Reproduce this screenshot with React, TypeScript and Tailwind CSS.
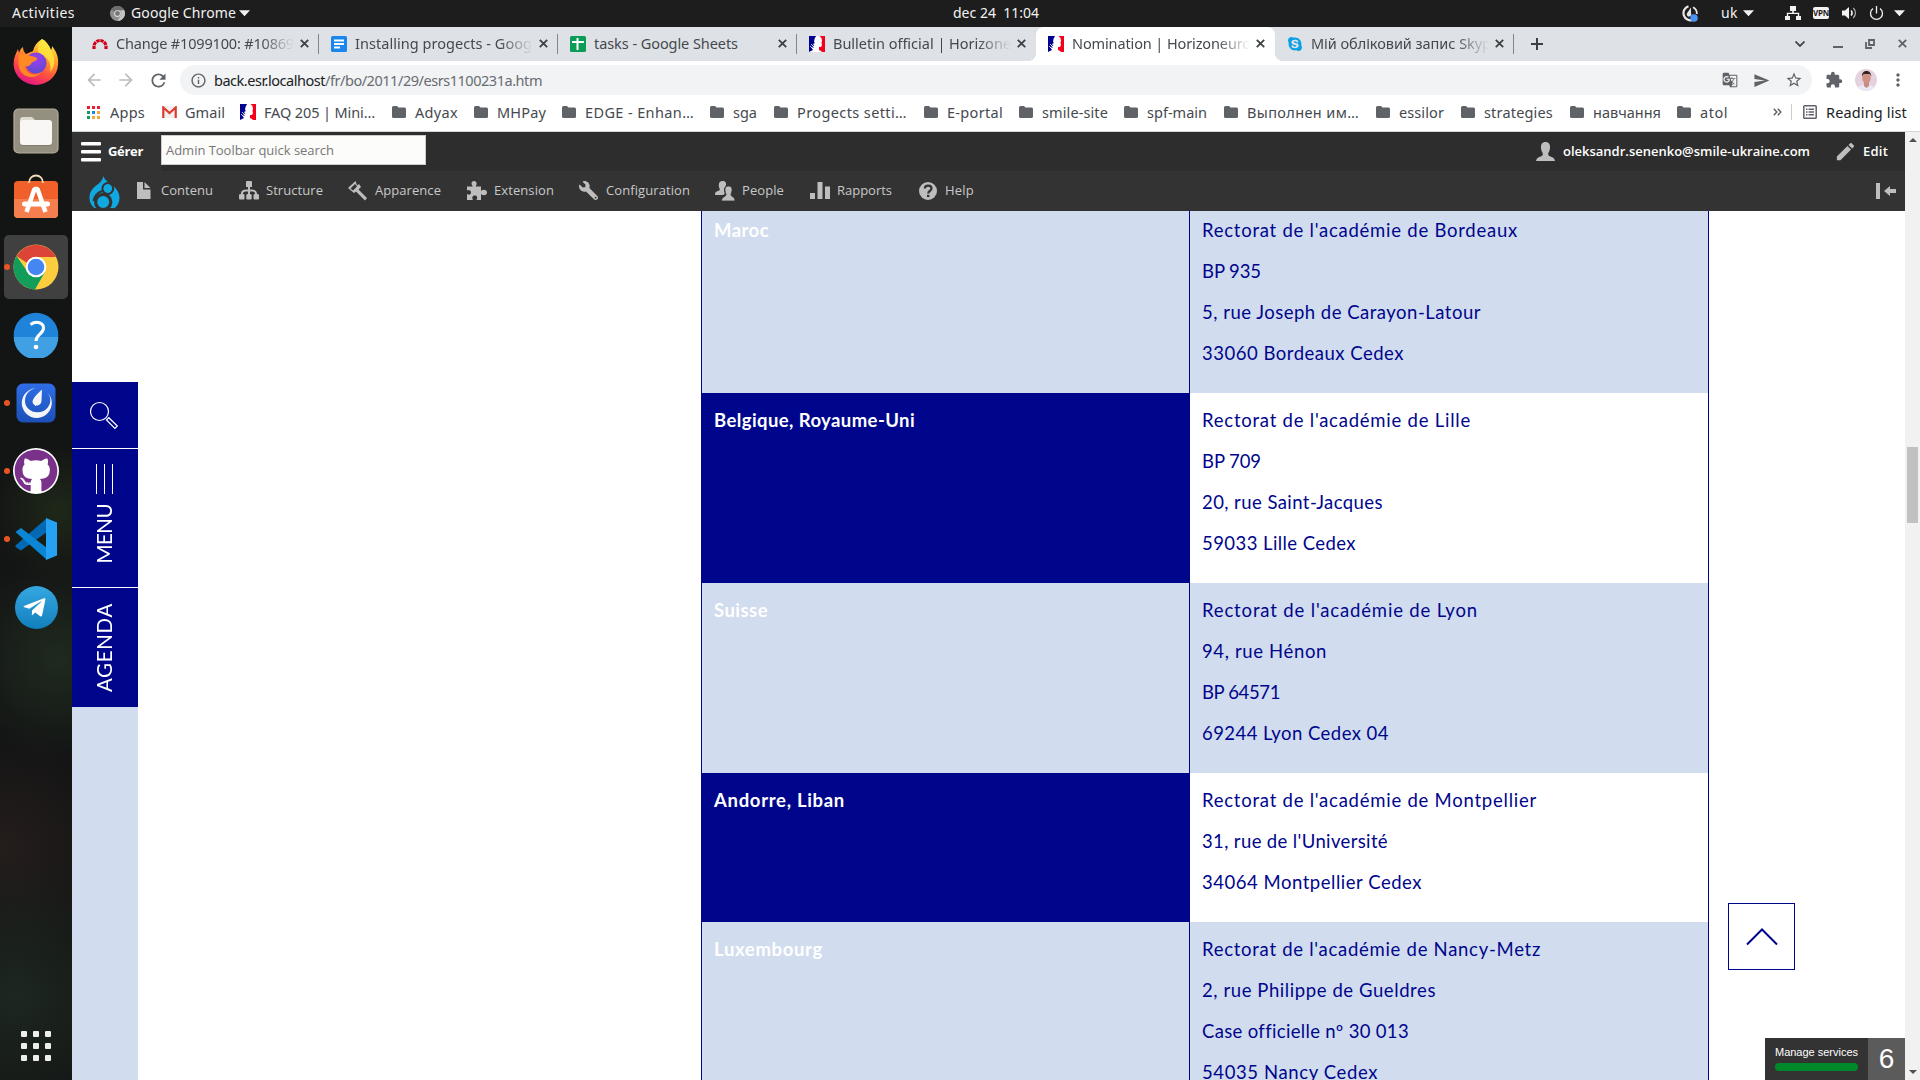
import React, { useLayoutEffect, useRef, useState } from "react";
import { MdGTranslate, MdSend, MdStarBorder, MdExtension, MdMoreVert, MdRefresh, MdArrowBack, MdArrowForward, MdInfoOutline, MdEdit } from "react-icons/md";
import { FaWrench, FaGithub, FaTelegramPlane, FaSkype } from "react-icons/fa";

/* Text set to a fixed advance width by adjusting its tracking. */
function Fit({ w, className = "", children }: { w: number; className?: string; children: string }) {
  const ref = useRef<HTMLSpanElement>(null);
  const [ls, setLs] = useState(0);
  useLayoutEffect(() => {
    const el = ref.current;
    if (!el) return;
    el.style.letterSpacing = "0px";
    const n = Array.from(children).length;
    const next = (w - el.getBoundingClientRect().width) / n;
    el.style.letterSpacing = next + "px";
    setLs(next);
  }, [w, children]);
  return (
    <span ref={ref} className={"inline-block whitespace-pre " + className} style={{ letterSpacing: ls + "px" }}>
      {children}
    </span>
  );
}

function Caret({ className = "" }: { className?: string }) {
  return (
    <svg width="11" height="7" viewBox="0 0 12 7" className={className}>
      <path d="M0 0h12L6 6.5z" fill="#f2f2f2" />
    </svg>
  );
}

function TopBar() {
  return (
    <header className="flex h-[27px] w-full shrink-0 items-center bg-[#1d1d1d] pb-px text-[14px] leading-none text-[#f2f2f2]">
      <div className="ml-[12px] w-[98px]"><Fit w={63}>Activities</Fit></div>
      <svg width="15" height="15" viewBox="0 0 16 16">
        <circle cx="8" cy="8" r="8" fill="#8f8f8f" />
        <path d="M8 0a8 8 0 0 1 7 4.2H8A4 4 0 0 0 4.4 6.5L1.6 3.300A8 8 0 0 1 8 0z" fill="#6d6d6d" />
        <path d="M15 4.200A8 8 0 0 1 8 16l3.500-6A4 4 0 0 0 11 5z" fill="#c4c4c4" />
        <circle cx="8" cy="8" r="3.600" fill="#ddd" />
        <circle cx="8" cy="8" r="2.600" fill="#777" />
      </svg>
      <div className="ml-[6px] w-[108px]"><Fit w={105}>Google Chrome</Fit></div>
      <Caret />
      <div className="ml-[703px] w-[728px]"><Fit w={86}>{"dec 24  11:04"}</Fit></div>
      <svg width="17" height="17" viewBox="0 0 17 17" fill="none">
        <path d="M7.500 1.200A7 7 0 1 0 12 15" stroke="#e6e6e6" strokeWidth="2.200" />
        <path d="M15.800 9A7 7 0 0 0 12 2.200" stroke="#e6e6e6" strokeWidth="1.800" />
        <path d="M10 2.500v5.500a2.300 2.300 0 1 1-3.500-.5z" fill="#e6e6e6" />
        <circle cx="13" cy="13" r="3.800" fill="#4a93f2" />
      </svg>
      <div className="ml-[23px] w-[22px]"><Fit w={17}>uk</Fit></div>
      <Caret />
      <svg className="ml-[31px]" width="16" height="14" viewBox="0 0 16 14" fill="#f2f2f2">
        <path d="M5 0h6v5H8.800v1.800h5.400V10H16v4h-5v-4h1.800V8H3.200v2H5v4H0v-4h1.800V6.800h5.400V5H5z" />
      </svg>
      <div className="ml-[12px] flex h-[12px] w-[16px] items-center justify-center rounded-[2px] bg-[#f2f2f2] text-[8px] font-bold tracking-[-0.3px] text-[#1d1d1d]">VPN</div>
      <svg className="ml-[13px]" width="15" height="14" viewBox="0 0 15 14" fill="none" stroke="#f2f2f2" strokeWidth="1.200">
        <path d="M0 4.500h3L7 1v12L3 9.500H0z" fill="#f2f2f2" stroke="none" />
        <path d="M9 4.500a3.500 3.500 0 0 1 0 5" strokeWidth="1.700" />
        <path d="M11.300 2a7 7 0 0 1 0 10" opacity=".7" />
      </svg>
      <svg className="ml-[12px]" width="15" height="15" viewBox="0 0 15 15" fill="none" stroke="#f2f2f2" strokeWidth="1.300">
        <path d="M4 2.500a6 6 0 1 0 7 0M7.500 0v7.500" />
      </svg>
      <Caret className="ml-[10px]" />
    </header>
  );
}

function FirefoxIcon() {
  return (
    <svg className="mb-[2px]" width="46" height="48" viewBox="0 0 46 48">
      <defs>
        <linearGradient id="ffBody" x1=".8" y1="0" x2=".35" y2="1">
          <stop offset="0" stopColor="#fff44f" /><stop offset=".35" stopColor="#ffa02b" />
          <stop offset=".7" stopColor="#ff4d42" /><stop offset="1" stopColor="#e31587" />
        </linearGradient>
        <radialGradient id="ffCore" cx=".5" cy=".3" r=".7">
          <stop offset="0" stopColor="#a13df0" /><stop offset="1" stopColor="#5b4bd0" />
        </radialGradient>
      </defs>
      <path d="M29 1c4 2 7 6 9 11 1-1 1-3 1-4 4 5 7 11 6 19A22.500 21 0 0 1 23 47 22.500 21 0 0 1 .6 26C.5 20 3 15 5 11l1 4c1-3 2-5 4-6 0 3 1 5 3 7l7-3c1-5 4-9 9-12z" fill="url(#ffBody)" />
      <path d="M29 1c4 2 7 6 9 11 5 9 4 17-1 22 2-9-2-14-8-17-5-2-6-8 0-16z" fill="#ffe83d" opacity=".8" />
      <circle cx="23" cy="25" r="10.500" fill="url(#ffCore)" />
      <path d="M6 17c5-2 9 0 12 1 3 1 6 1 6 3s-5 2-6 5c-1 2-5 3-6 2 1 8 10 11 16 6-4 7-17 7-21-2-2-5-2-10-1-15z" fill="#ff8a23" />
    </svg>
  );
}
function FilesIcon() {
  return (
    <svg width="46" height="46" viewBox="0 0 46 46">
      <rect x="1" y="1" width="44" height="44" rx="4.500" fill="#958f80" stroke="#b4ad9c" strokeWidth="1.200" />
      <path d="M7 12q0-3 3-3h9l3 3h11v9H7z" fill="#dedbd2" />
      <rect x="7" y="13" width="32" height="25" rx="3" fill="#6d675b" opacity=".5" />
      <rect x="7" y="12" width="32" height="25" rx="3" fill="#f8f7f5" />
    </svg>
  );
}
function SoftwareIcon() {
  return (
    <svg className="mb-[6px]" width="46" height="46" viewBox="0 0 46 46">
      <rect x="1" y="8" width="44" height="37" rx="4" fill="#f0602a" />
      <path d="M1 26h44v15a4 4 0 0 1-4 4H5a4 4 0 0 1-4-4z" fill="#f47e4d" />
      <path d="M16 10c0-10 14-10 14 0" fill="none" stroke="#f4dcb4" strokeWidth="1.800" />
      <path d="M13.500 39 21.500 16h3l8 23" fill="none" stroke="#fff" strokeWidth="4.500" strokeLinejoin="bevel" />
      <rect x="9" y="28.500" width="28" height="5" rx="2.500" fill="#fff" />
    </svg>
  );
}
function ChromeIcon() {
  return (
    <svg width="46" height="46" viewBox="0 0 46 46">
      <circle cx="23" cy="23" r="22.500" fill="#fdcd40" />
      <path d="M3.500 12A22.500 22.500 0 0 1 43 13H23a10 10 0 0 0-9 6z" fill="#dc4437" />
      <path d="M3.500 12A22.500 22.500 0 0 0 22 45.500l10-17.500c-6 7-15 5-18-1z" fill="#129e5a" />
      <circle cx="23" cy="23" r="10.300" fill="#fff" />
      <circle cx="23" cy="23" r="8.300" fill="#4586f3" />
    </svg>
  );
}
function HelpIcon() {
  return (
    <svg width="46" height="46" viewBox="0 0 46 46">
      <circle cx="23" cy="23" r="22.300" fill="#1e83d9" />
      <path d="M.7 25a22.300 22.300 0 0 0 44.600 0z" fill="#41a0e4" />
      <path d="M17.500 12.500c6-4 13-2 13 3.500 0 6-7.500 6.500-7.500 13" fill="none" stroke="#fff" strokeWidth="3" />
      <circle cx="23" cy="35" r="2.300" fill="#fff" />
    </svg>
  );
}
function MattermostIcon() {
  return (
    <svg width="40" height="40" viewBox="0 0 40 40">
      <defs><linearGradient id="mm" x1="0" y1="0" x2="0" y2="1"><stop offset="0" stopColor="#2f6de6" /><stop offset="1" stopColor="#1c50b8" /></linearGradient></defs>
      <rect x=".5" y=".5" width="39" height="39" rx="6.500" fill="url(#mm)" />
      <path d="M20.500 5A15 15 0 1 0 31.500 9.500a12 12 0 0 1-4 18.500C18 32 9 26 9 18 9 11 14 6 20.500 5z" fill="#f3f5f8" />
      <path d="M26 6.500c-4 4-8 7-9.300 11-1.400 6 8.500 7 8.800.5z" fill="#f3f5f8" />
    </svg>
  );
}
function VsCodeIcon() {
  return (
    <svg width="44" height="44" viewBox="0 0 44 44">
      <path d="M1.500 28.500 33 1v14L7 33.500 1.500 30z" fill="#0469b4" />
      <path d="M1.500 15 7 11 33 31v12z" fill="#0b86d4" />
      <path d="M32 1l11 4.500v33L32 43z" fill="#25a2f3" />
    </svg>
  );
}

function Dock() {
  const items: { icon: React.ReactNode; run?: boolean; active?: boolean }[] = [
    { icon: <FirefoxIcon /> },
    { icon: <FilesIcon /> },
    { icon: <SoftwareIcon /> },
    { icon: <ChromeIcon />, run: true, active: true },
    { icon: <HelpIcon /> },
    { icon: <MattermostIcon />, run: true },
    { icon: <div className="flex size-[46px] items-center justify-center rounded-full bg-white"><FaGithub className="size-[44px] text-[#7a3189]" /></div>, run: true },
    { icon: <VsCodeIcon />, run: true },
    { icon: <div className="flex size-[43px] items-center justify-center rounded-full bg-linear-to-b from-[#35a7e0] to-[#0f7fbd]"><FaTelegramPlane className="mr-[3px] size-[25px] text-white" /></div> },
  ];
  return (
    <aside className="flex w-[72px] shrink-0 flex-col bg-[#131414] bg-[radial-gradient(circle_at_80%_60%,#1f2a1f_0,transparent_16%),radial-gradient(circle_at_20%_92%,#1d2720_0,transparent_14%),radial-gradient(circle_at_80%_46%,#1e2819_0,transparent_12%),radial-gradient(circle_at_10%_78%,#241d1c_0,transparent_14%)] pt-[2px]">
      {items.map((it, i) => (
        <div key={i} className="relative flex h-[68px] items-center justify-center">
          <div className={"flex size-[64px] items-center justify-center rounded-[5px] " + (it.active ? "bg-[#404040]" : "")}>{it.icon}</div>
          {it.run && <span className="absolute left-[4px] size-[6px] rounded-full bg-[#e95420]" />}
        </div>
      ))}
      <div className="mt-auto mb-[19px] ml-[21px] grid w-[30px] grid-cols-3 gap-[6px]">
        {Array.from({ length: 9 }, (_, i) => <span key={i} className="size-[6px] rounded-[1px] bg-[#eeeeec]" />)}
      </div>
    </aside>
  );
}

function FlagIcon() {
  return (
    <svg width="16" height="16" viewBox="0 0 16 16">
      <rect width="16" height="16" fill="#fff" />
      <path d="M0 0h7L5.500 3l-.5 3 1 1-2 1 1.500 2L3 9.500 5 12l-3-1 2 3-4 2z" fill="#000091" />
      <path d="M2 8l3 3M1 10l3 3" stroke="#fff" strokeWidth=".8" />
      <path d="M16 0h-5.500l2 2 .5 3-.500 2 .5 2-1 2h-2v3l2 1 1 1h3z" fill="#f5001d" />
    </svg>
  );
}
function RedmineIcon() {
  return (
    <svg width="16" height="16" viewBox="0 0 16 16" fill="none">
      <path d="M2 13V10.500a6 6 0 0 1 12 0V13" stroke="#d0021b" strokeWidth="3.200" strokeDasharray="3.300 .7" />
    </svg>
  );
}
function DocsIcon() {
  return (
    <svg width="16" height="16" viewBox="0 0 16 16">
      <rect width="16" height="16" rx="1.500" fill="#1a86ee" />
      <path d="M3 3.500h10v2H3zM3 7h10v2H3zM3 10.500h6v2H3z" fill="#fff" />
    </svg>
  );
}
function SheetsIcon() {
  return (
    <svg width="16" height="16" viewBox="0 0 16 16">
      <rect width="16" height="16" rx="1.500" fill="#0b9d58" />
      <path d="M2 5h4.500V2h2v3H14v2H8.500v7h-2V7H2z" fill="#fff" />
    </svg>
  );
}
function X({ color = "#3c4043" }: { color?: string }) {
  return (
    <svg width="9" height="9" viewBox="0 0 9 9" stroke={color} strokeWidth="1.800"><path d="M.8.8l7.400 7.400M8.200.8.8 8.200" /></svg>
  );
}

function TabStrip() {
  const tabs = [
    { icon: <RedmineIcon />, t: "Change #1099100: #10869", w: 178, fade: true, sep: true },
    { icon: <DocsIcon />, t: "Installing progects - Goog", w: 177, fade: true, sep: true },
    { icon: <SheetsIcon />, t: "tasks - Google Sheets", w: 144, sep: true },
    { icon: <FlagIcon />, t: "Bulletin official | Horizone", w: 178, fade: true },
    { icon: <FlagIcon />, t: "Nomination | Horizoneuro", w: 179, fade: true, active: true },
    { icon: <FaSkype className="size-[16px] text-[#0aa1e4]" />, t: "Мій обліковий запис Skyp", w: 180, fade: true, sep: true },
  ];
  return (
    <div className="flex h-[34px] shrink-0 items-center bg-[#dee1e6] pl-[8px] text-[14.500px] leading-none text-[#45494d]">
      {tabs.map((t, i) => (
        <div
          key={i}
          className={
            "relative flex h-full w-[239px] shrink-0 items-center pb-px pl-[12px] " +
            (t.active ? "rounded-t-lg bg-white before:absolute before:bottom-0 before:-left-[8px] before:size-[8px] before:bg-[radial-gradient(circle_at_0_0,#dee1e6_8px,white_8px)] after:absolute after:bottom-0 after:-right-[8px] after:size-[8px] after:bg-[radial-gradient(circle_at_100%_0,#dee1e6_8px,white_8px)]" : "")
          }
        >
          {t.icon}
          <div className={"ml-[8px] h-[22px] w-[182px] leading-[21px] " + (t.fade ? "mask-[linear-gradient(to_right,black_145px,transparent_178px)]" : "")}>
            <Fit w={t.w}>{t.t}</Fit>
          </div>
          <div className="ml-[2px] flex"><X /></div>
          {t.sep && <span className="absolute right-0 h-[20px] w-px bg-[#80868b]" />}
        </div>
      ))}
      <svg className="mb-px ml-[17px]" width="12" height="12" viewBox="0 0 12 12" stroke="#3c4043" strokeWidth="2"><path d="M6 0v12M0 6h12" /></svg>
      <div className="mr-[13px] mb-px ml-auto flex items-center">
        <svg className="mr-[28px]" width="10" height="6" viewBox="0 0 10 6" fill="none" stroke="#45494d" strokeWidth="1.800"><path d="M.5.5 5 5 9.500.5" /></svg>
        <span className="mt-[7px] mr-[22px] h-[2px] w-[10px] bg-[#5f6368]" />
        <svg className="mr-[23px]" width="10" height="10" viewBox="0 0 10 10" fill="none" stroke="#5f6368" strokeWidth="1.800"><path d="M4 1h5v5H4zM1 3v6h6" /></svg>
        <X color="#5f6368" />
      </div>
    </div>
  );
}

function AddressBar() {
  return (
    <div className="flex h-[38px] shrink-0 items-center bg-white text-[#5f6368]">
      <MdArrowBack className="ml-[12px] size-[20px] text-[#babcbe]" />
      <MdArrowForward className="ml-[12px] size-[20px] text-[#babcbe]" />
      <MdRefresh className="ml-[12px] size-[21px]" />
      <div className="ml-[11px] flex h-[30px] w-[1632px] items-center rounded-full bg-[#f1f3f4] pl-[10px] text-[14.500px] leading-none">
        <MdInfoOutline className="size-[17px]" />
        <Fit w={111} className="ml-[7px] text-[#202124]">back.esr.localhost</Fit>
        <Fit w={217} className="text-[#686c71]">/fr/bo/2011/29/esrs1100231a.htm</Fit>
        <div className="mr-[9px] ml-auto flex items-center">
          <MdGTranslate className="mr-[15px] size-[16px]" />
          <MdSend className="mr-[15px] size-[17px]" />
          <MdStarBorder className="size-[18px]" />
        </div>
      </div>
      <MdExtension className="ml-[13px] size-[18px]" />
      <svg className="ml-[12px]" width="22" height="22" viewBox="0 0 22 22">
        <defs><clipPath id="av"><circle cx="11" cy="11" r="11" /></clipPath></defs>
        <g clipPath="url(#av)">
          <rect width="22" height="22" fill="#e4d3df" />
          <path d="M2 22c0-5 4-6 9-6s9 1 9 6z" fill="#e8eaf6" />
          <path d="M9 13h5v4l-2.500 2L9 17z" fill="#c98b7d" />
          <ellipse cx="11.500" cy="9" rx="4.300" ry="5.800" fill="#cf9284" />
          <path d="M7 7.500c-1-7.500 10-7.500 9.200 0L15 5H8.500z" fill="#33241f" />
        </g>
      </svg>
      <MdMoreVert className="ml-[11px] size-[20px]" />
    </div>
  );
}

function Folder() {
  return (
    <svg width="14" height="12" viewBox="0 0 14 12"><path d="M1.500 0H5l1.500 1.500h6A1.500 1.500 0 0 1 14 3v7.500a1.500 1.500 0 0 1-1.500 1.500h-11A1.500 1.500 0 0 1 0 10.500v-9A1.500 1.500 0 0 1 1.500 0z" fill="#5f6368" /></svg>
  );
}

function Bookmarks() {
  const folders: [string, number, number][] = [
    ["Adyax", 43, 16], ["MHPay", 49, 16], ["EDGE - Enhan…", 109, 16], ["sga", 24, 17], ["Progects setti…", 110, 17],
    ["E-portal", 56, 16], ["smile-site", 66, 16], ["spf-main", 60, 17], ["Выполнен им…", 112, 17], ["essilor", 45, 17],
    ["strategies", 69, 17], ["навчання", 68, 16], ["atol", 28, 16],
  ];
  const dots = ["#ea2039", "#ea2039", "#ea2039", "#11a05b", "#1a86ee", "#f6a63b", "#11a05b", "#f6a63b", "#f6a63b"];
  return (
    <div className="flex h-[33px] shrink-0 items-center border-b border-[#d5d7d6] bg-white pb-[6px] pl-[15px] text-[14.500px] leading-none text-[#45494d]">
      <div className="mr-[10px] grid grid-cols-3 gap-[2px]">
        {dots.map((c, i) => <span key={i} className="size-[3px]" style={{ backgroundColor: c }} />)}
      </div>
      <Fit w={35}>Apps</Fit>
      <svg className="ml-[17px]" width="15" height="12" viewBox="0 0 15 12">
        <rect width="15" height="12" rx="1" fill="#f0f0f0" />
        <path d="M1.300 12V1.500L7.500 7l6.200-5.500V12" fill="none" stroke="#de3b31" strokeWidth="2.200" />
      </svg>
      <Fit w={40} className="ml-[8px]">Gmail</Fit>
      <div className="mr-[8px] ml-[15px]"><FlagIcon /></div>
      <Fit w={111} className="mr-[17px]">FAQ 205 | Mini…</Fit>
      {folders.map(([t, w, g], i) => (
        <React.Fragment key={i}>
          <Folder />
          <Fit w={w} className="ml-[9px]">{t}</Fit>
          <span className={g === 17 ? "w-[17px]" : "w-[16px]"} />
        </React.Fragment>
      ))}
      <div className="mr-[13px] ml-auto flex items-center">
        <svg width="9" height="8" viewBox="0 0 9 8" fill="none" stroke="#5f6368" strokeWidth="1.500"><path d="M.8.8 3.800 4 .8 7.200M4.800.8 7.800 4l-3 3.200" /></svg>
        <span className="ml-[9px] h-[16px] w-px bg-[#c9ccd0]" />
        <svg className="ml-[11px]" width="14" height="14" viewBox="0 0 14 14" fill="none" stroke="#5f6368"><rect x=".8" y=".8" width="12.400" height="12.400" rx=".8" strokeWidth="1.500" /><path d="M3 4.300h1.500M3 7h1.500M3 9.700h1.500M5.500 4.300H11M5.500 7H11M5.500 9.700H11" strokeWidth="1.400" /></svg>
        <Fit w={81} className="ml-[9px] text-[#202124]">Reading list</Fit>
      </div>
    </div>
  );
}

function UserShape() {
  return (
    <svg width="19" height="20" viewBox="0 0 19 20" fill="#bebebe">
      <path d="M9.500 0C13 0 14.300 2.500 14 6c-.2 2.500-1 4-1.700 5-.5 2 .2 3 2.200 3.600 2.500.8 4 2 4.500 4.400H0c.5-2.400 2-3.600 4.500-4.400 2-.6 2.700-1.600 2.200-3.600C6 10 5.200 8.500 5 6c-.3-3.500 1-6 4.500-6z" />
    </svg>
  );
}

function DrupalDrop() {
  return (
    <svg className="mr-[17px] ml-[17px]" width="31" height="33" viewBox="0 0 31 33">
      <path d="M14.300 0C16 4.500 19 6 23 9c4.500 3.500 7.500 7.500 7.500 13 0 4.500-2 8-5.500 10.500H6C2.500 30 .5 26.500.5 22 .5 16.500 3 13 6.500 10 10.500 7 13.500 5 14.300 0z" fill="#0fa8e0" />
      <path d="M4.500 25c1-5 4-8.500 9-10" fill="none" stroke="#333" strokeWidth="2.200" />
      <circle cx="18.800" cy="12.500" r="5.300" fill="none" stroke="#333" strokeWidth="2.200" />
      <circle cx="14.200" cy="26" r="7.600" fill="#0fa8e0" stroke="#333" strokeWidth="3.200" />
      <circle cx="18.800" cy="12.500" r="4.200" fill="#0fa8e0" />
      <path d="M5 32h19l3 2H3z" fill="#333" />
    </svg>
  );
}

const trayIcon = {
  content: <svg width="14" height="17" viewBox="0 0 14 17" fill="#bebebe"><path d="M0 0h6v7.500h7.500V17H0zM7.500 0l6 6h-6z" /></svg>,
  structure: <svg width="20" height="19" viewBox="0 0 20 19" fill="#bebebe"><path d="M7 1q0-1 1-1h4q1 0 1 1v5h-2v2.500c4 0 7 .5 7 4.500q2 0 2 1v3.500q0 1-1 1h-3.500q-1 0-1-1V14q0-1 1.500-1c0-2-1-2.500-5-2.500V13q1.700 0 1.700 1v3.500q0 1-1 1H8.300q-1 0-1-1V14q0-1 1.700-1v-2.500c-4 0-5 .5-5 2.500q1.500 0 1.500 1v3.500q0 1-1 1H1q-1 0-1-1V14q0-1 2-1c0-4 3-4.500 7-4.500V6H7z" /></svg>,
  appearance: <svg width="19" height="20" viewBox="0 0 19 20" fill="#bebebe"><path d="M7.500 0 0 7l6 5 2-1.500 9 9 2-2.500-8.500-8.500L13 6l-2-3-2 1.500zM7 3l2 2.500-4 4-2.500-2z" /></svg>,
  extension: <svg width="20" height="20" viewBox="0 0 20 20" fill="#bebebe"><path d="M6 5.500C3.500 3 4.500 0 7 0s3.700 3 1.500 5.500H14V10c2-2 6-1.500 6 1.500s-4 3.500-6 1.500v6H9.500c1.500-2.500.5-4.500-1.700-4.500S4.500 16.500 6 19H0v-6c2 1.500 4 .5 4-1.500S2 8 0 9.500v-4z" /></svg>,
  people: <svg width="20" height="20" viewBox="0 0 20 20" fill="#bebebe"><path d="M7.500 0c3 0 4 2 3.500 4.500C10 5.500 9 7 9 9c0 2 .6 3 1 3.600L8 14H0c0-3 1-3.500 3-4 2-.6 2-1.500 1.500-2.500C3 3.500 4 0 7.500 0z" /><path d="M13.500 5c3 0 4 2.500 3.500 5-.4 2-1 2.300-1 4 .5 2 4 1.500 4 6H6.500c0-4 3.500-4 4.500-6 0-1.500-.7-2-1-4-.5-2.500.5-5 3.500-5z" stroke="#333" strokeWidth=".8" /></svg>,
  reports: <svg width="20" height="17" viewBox="0 0 20 17" fill="#bebebe"><path d="M0 11h5v6H0zM7.500 0h5v17h-5zM15 4.500h5V17h-5z" /></svg>,
  help: <svg width="18" height="18" viewBox="0 0 18 18"><circle cx="9" cy="9" r="9" fill="#bebebe" /><path d="M5.800 6.500C6 2.500 12.500 3 12.500 6.500 12.500 9 9.200 8.500 9.200 11.500" fill="none" stroke="#333" strokeWidth="2.200" /><rect x="8" y="12.800" width="2.400" height="2.300" fill="#333" /></svg>,
};

function AdminToolbar() {
  const items: { icon: React.ReactNode; t: string; w: number; cls: string }[] = [
    { icon: trayIcon.content, t: "Contenu", w: 52, cls: "w-[102px] gap-[10px]" },
    { icon: trayIcon.structure, t: "Structure", w: 57, cls: "w-[109px] gap-[7px]" },
    { icon: trayIcon.appearance, t: "Apparence", w: 66, cls: "w-[119px] gap-[8px]" },
    { icon: trayIcon.extension, t: "Extension", w: 60, cls: "w-[112px] gap-[7px]" },
    { icon: <FaWrench className="size-[19px] -scale-x-100 text-[#bebebe]" />, t: "Configuration", w: 84, cls: "w-[136px] gap-[8px]" },
    { icon: trayIcon.people, t: "People", w: 42, cls: "w-[95px] gap-[7px]" },
    { icon: trayIcon.reports, t: "Rapports", w: 55, cls: "w-[109px] gap-[7px]" },
    { icon: trayIcon.help, t: "Help", w: 29, cls: "w-[60px] gap-[8px]" },
  ];
  return (
    <div className="shrink-0 font-['Open_Sans','Noto_Sans',sans-serif] text-[13px] leading-none">
      <div className="flex h-[39px] items-center bg-[#2d2d2d] font-bold text-white">
        <div className="flex h-full w-[89px] items-center bg-[#333] pl-[9px]">
          <svg width="20" height="20" viewBox="0 0 20 20" fill="#fff"><rect width="20" height="3.600" rx="1" /><rect y="8" width="20" height="3.600" rx="1" /><rect y="16" width="20" height="3.600" rx="1" /></svg>
          <Fit w={35} className="ml-[7px]">Gérer</Fit>
        </div>
        <div className="mb-[3px] flex h-[30px] w-[265px] items-center border border-[#ccc] bg-[#fcfcfa] pl-[4px] font-normal text-[#777]">
          <Fit w={168}>Admin Toolbar quick search</Fit>
        </div>
        <div className="mr-[17px] ml-auto flex items-center font-semibold">
          <UserShape />
          <Fit w={247} className="ml-[8px]">oleksandr.senenko@smile-ukraine.com</Fit>
          <MdEdit className="ml-[24px] size-[23px] text-[#bebebe]" />
          <Fit w={25} className="ml-[6px]">Edit</Fit>
        </div>
      </div>
      <div className="flex h-[40px] items-center bg-[#333] pb-px text-[#c8c8c8]">
        <div className="pt-[3px]"><DrupalDrop /></div>
        {items.map((it) => (
          <div key={it.t} className={"flex shrink-0 items-center " + it.cls}>
            {it.icon}
            <Fit w={it.w} className="pb-px">{it.t}</Fit>
          </div>
        ))}
        <svg className="mr-[9px] ml-auto" width="20" height="16" viewBox="0 0 20 16" fill="#bebebe"><path d="M0 0h4v16H0zM8 8l6-5v3h6v4h-6v3z" /></svg>
      </div>
    </div>
  );
}

const rows: { head: [string, number]; lines: [string, number][]; dark: boolean }[] = [
  { head: ["Maroc", 55], dark: false, lines: [["Rectorat de l'académie de Bordeaux", 316], ["BP 935", 59], ["5, rue Joseph de Carayon-Latour", 279], ["33060 Bordeaux Cedex", 202]] },
  { head: ["Belgique, Royaume-Uni", 201], dark: true, lines: [["Rectorat de l'académie de Lille", 269], ["BP 709", 59], ["20, rue Saint-Jacques", 181], ["59033 Lille Cedex", 154]] },
  { head: ["Suisse", 54], dark: false, lines: [["Rectorat de l'académie de Lyon", 276], ["94, rue Hénon", 125], ["BP 64571", 78], ["69244 Lyon Cedex 04", 187]] },
  { head: ["Andorre, Liban", 131], dark: true, lines: [["Rectorat de l'académie de Montpellier", 335], ["31, rue de l'Université", 186], ["34064 Montpellier Cedex", 220]] },
  { head: ["Luxembourg", 109], dark: false, lines: [["Rectorat de l'académie de Nancy-Metz", 339], ["2, rue Philippe de Gueldres", 234], ["Case officielle nº 30 013", 206], ["54035 Nancy Cedex", 176]] },
];

/* Vertical counterpart of Fit. */
function VFit({ h, children }: { h: number; children: string }) {
  const ref = useRef<HTMLSpanElement>(null);
  const [ls, setLs] = useState(0);
  useLayoutEffect(() => {
    if (ref.current) setLs((h - ref.current.offsetHeight) / children.length);
  }, []);
  return <span ref={ref} className="inline-block" style={{ letterSpacing: ls + "px" }}>{children}</span>;
}

function SideNav() {
  return (
    <nav className="flex w-[66px] shrink-0 flex-col pt-[171px] text-[20.500px] leading-none text-white">
      <div className="flex h-[67px] items-center justify-center border-b border-white bg-[#00068c] pt-[2px] pr-[2px]">
        <svg width="30" height="30" viewBox="0 0 30 30" fill="none" stroke="#fff" strokeWidth="1.200">
          <circle cx="10.500" cy="10.500" r="9" /><path d="M17.500 19l2.300-2.300 8.500 8.300-2.400 2.400z" />
        </svg>
      </div>
      <div className="flex h-[139px] flex-col items-center border-b border-white bg-[#00068c] pt-[15px] pr-px">
        <div className="flex h-[30px] w-[17px] justify-between"><i className="w-px bg-white" /><i className="w-px bg-white" /><i className="w-px bg-white" /></div>
        <div className="mt-[10px] rotate-180 [writing-mode:vertical-rl]"><VFit h={60}>MENU</VFit></div>
      </div>
      <div className="flex h-[119px] items-center justify-center bg-[#00068c] pr-px">
        <div className="rotate-180 [writing-mode:vertical-rl]"><VFit h={89}>AGENDA</VFit></div>
      </div>
      <div className="grow bg-[#d1dcee]" />
    </nav>
  );
}

function Page() {
  return (
    <main className="relative flex min-h-0 grow overflow-hidden bg-white font-[Lato,sans-serif]">
      <SideNav />
      <div className="-mt-[8px] ml-[563px] flex h-[900px] w-[1008px] flex-col border-x border-[#00068c] text-[18.500px] text-[#00068c]">
        {rows.map((r) => (
          <div key={r.head[0]} className={"flex shrink-0 " + (r.dark ? "" : "bg-[#d1dcee]")}>
            <div className={"w-[488px] border-r border-[#00068c] px-[12px] pt-[14px] pb-[12px] leading-[27px] font-bold text-white " + (r.dark ? "bg-[#00068c]" : "")}>
              <Fit w={r.head[1]}>{r.head[0]}</Fit>
            </div>
            <div className="px-[12px] pt-[14px] pb-[12px]">
              {r.lines.map(([t, w]) => (
                <p key={t} className="mb-[14px] h-[27px] leading-[27px]"><Fit w={w}>{t}</Fit></p>
              ))}
            </div>
          </div>
        ))}
      </div>
      <button className="absolute top-[692px] left-[1656px] flex size-[67px] items-center justify-center border border-[#00068c] bg-white">
        <svg width="32" height="18" viewBox="0 0 32 18" fill="none" stroke="#00068c" strokeWidth="2"><path d="M1 16.500 16 1.500l15 15" /></svg>
      </button>
      <div className="absolute right-0 bottom-0 flex h-[42px] w-[140px] bg-[#333] font-['Liberation_Sans',sans-serif] text-white">
        <div className="flex w-[103px] flex-col items-start pt-[8px] pl-[10px] text-[11px] leading-[13px]">
          <Fit w={83}>Manage services</Fit>
          <span className="mt-[4px] h-[8px] w-[83px] rounded-full bg-[#00892a]" />
        </div>
        <div className="flex w-[37px] items-center justify-center bg-[#5b5b5b] text-[28px] leading-none">6</div>
      </div>
    </main>
  );
}

function Scrollbar() {
  return (
    <div className="flex w-[15px] shrink-0 flex-col items-center bg-[#f1f1f1]">
      <svg className="mt-[6px]" width="8" height="4" viewBox="0 0 8 4"><path d="M4 0l4 4H0z" fill="#505050" /></svg>
      <div className="mt-[305px] h-[76px] w-[11px] bg-[#c1c1c1]" />
      <svg className="mt-auto mb-[6px]" width="8" height="4" viewBox="0 0 8 4"><path d="M0 0h8L4 4z" fill="#505050" /></svg>
    </div>
  );
}

export default function App() {
  return (
    <div className="flex h-[1080px] w-[1920px] flex-col overflow-hidden bg-white font-['Noto_Sans',sans-serif]">
      <TopBar />
      <div className="flex min-h-0 grow">
        <Dock />
        <div className="flex min-w-0 grow flex-col">
          <TabStrip />
          <AddressBar />
          <Bookmarks />
          <div className="flex min-h-0 grow">
            <div className="flex min-w-0 grow flex-col">
              <AdminToolbar />
              <Page />
            </div>
            <Scrollbar />
          </div>
        </div>
      </div>
    </div>
  );
}
